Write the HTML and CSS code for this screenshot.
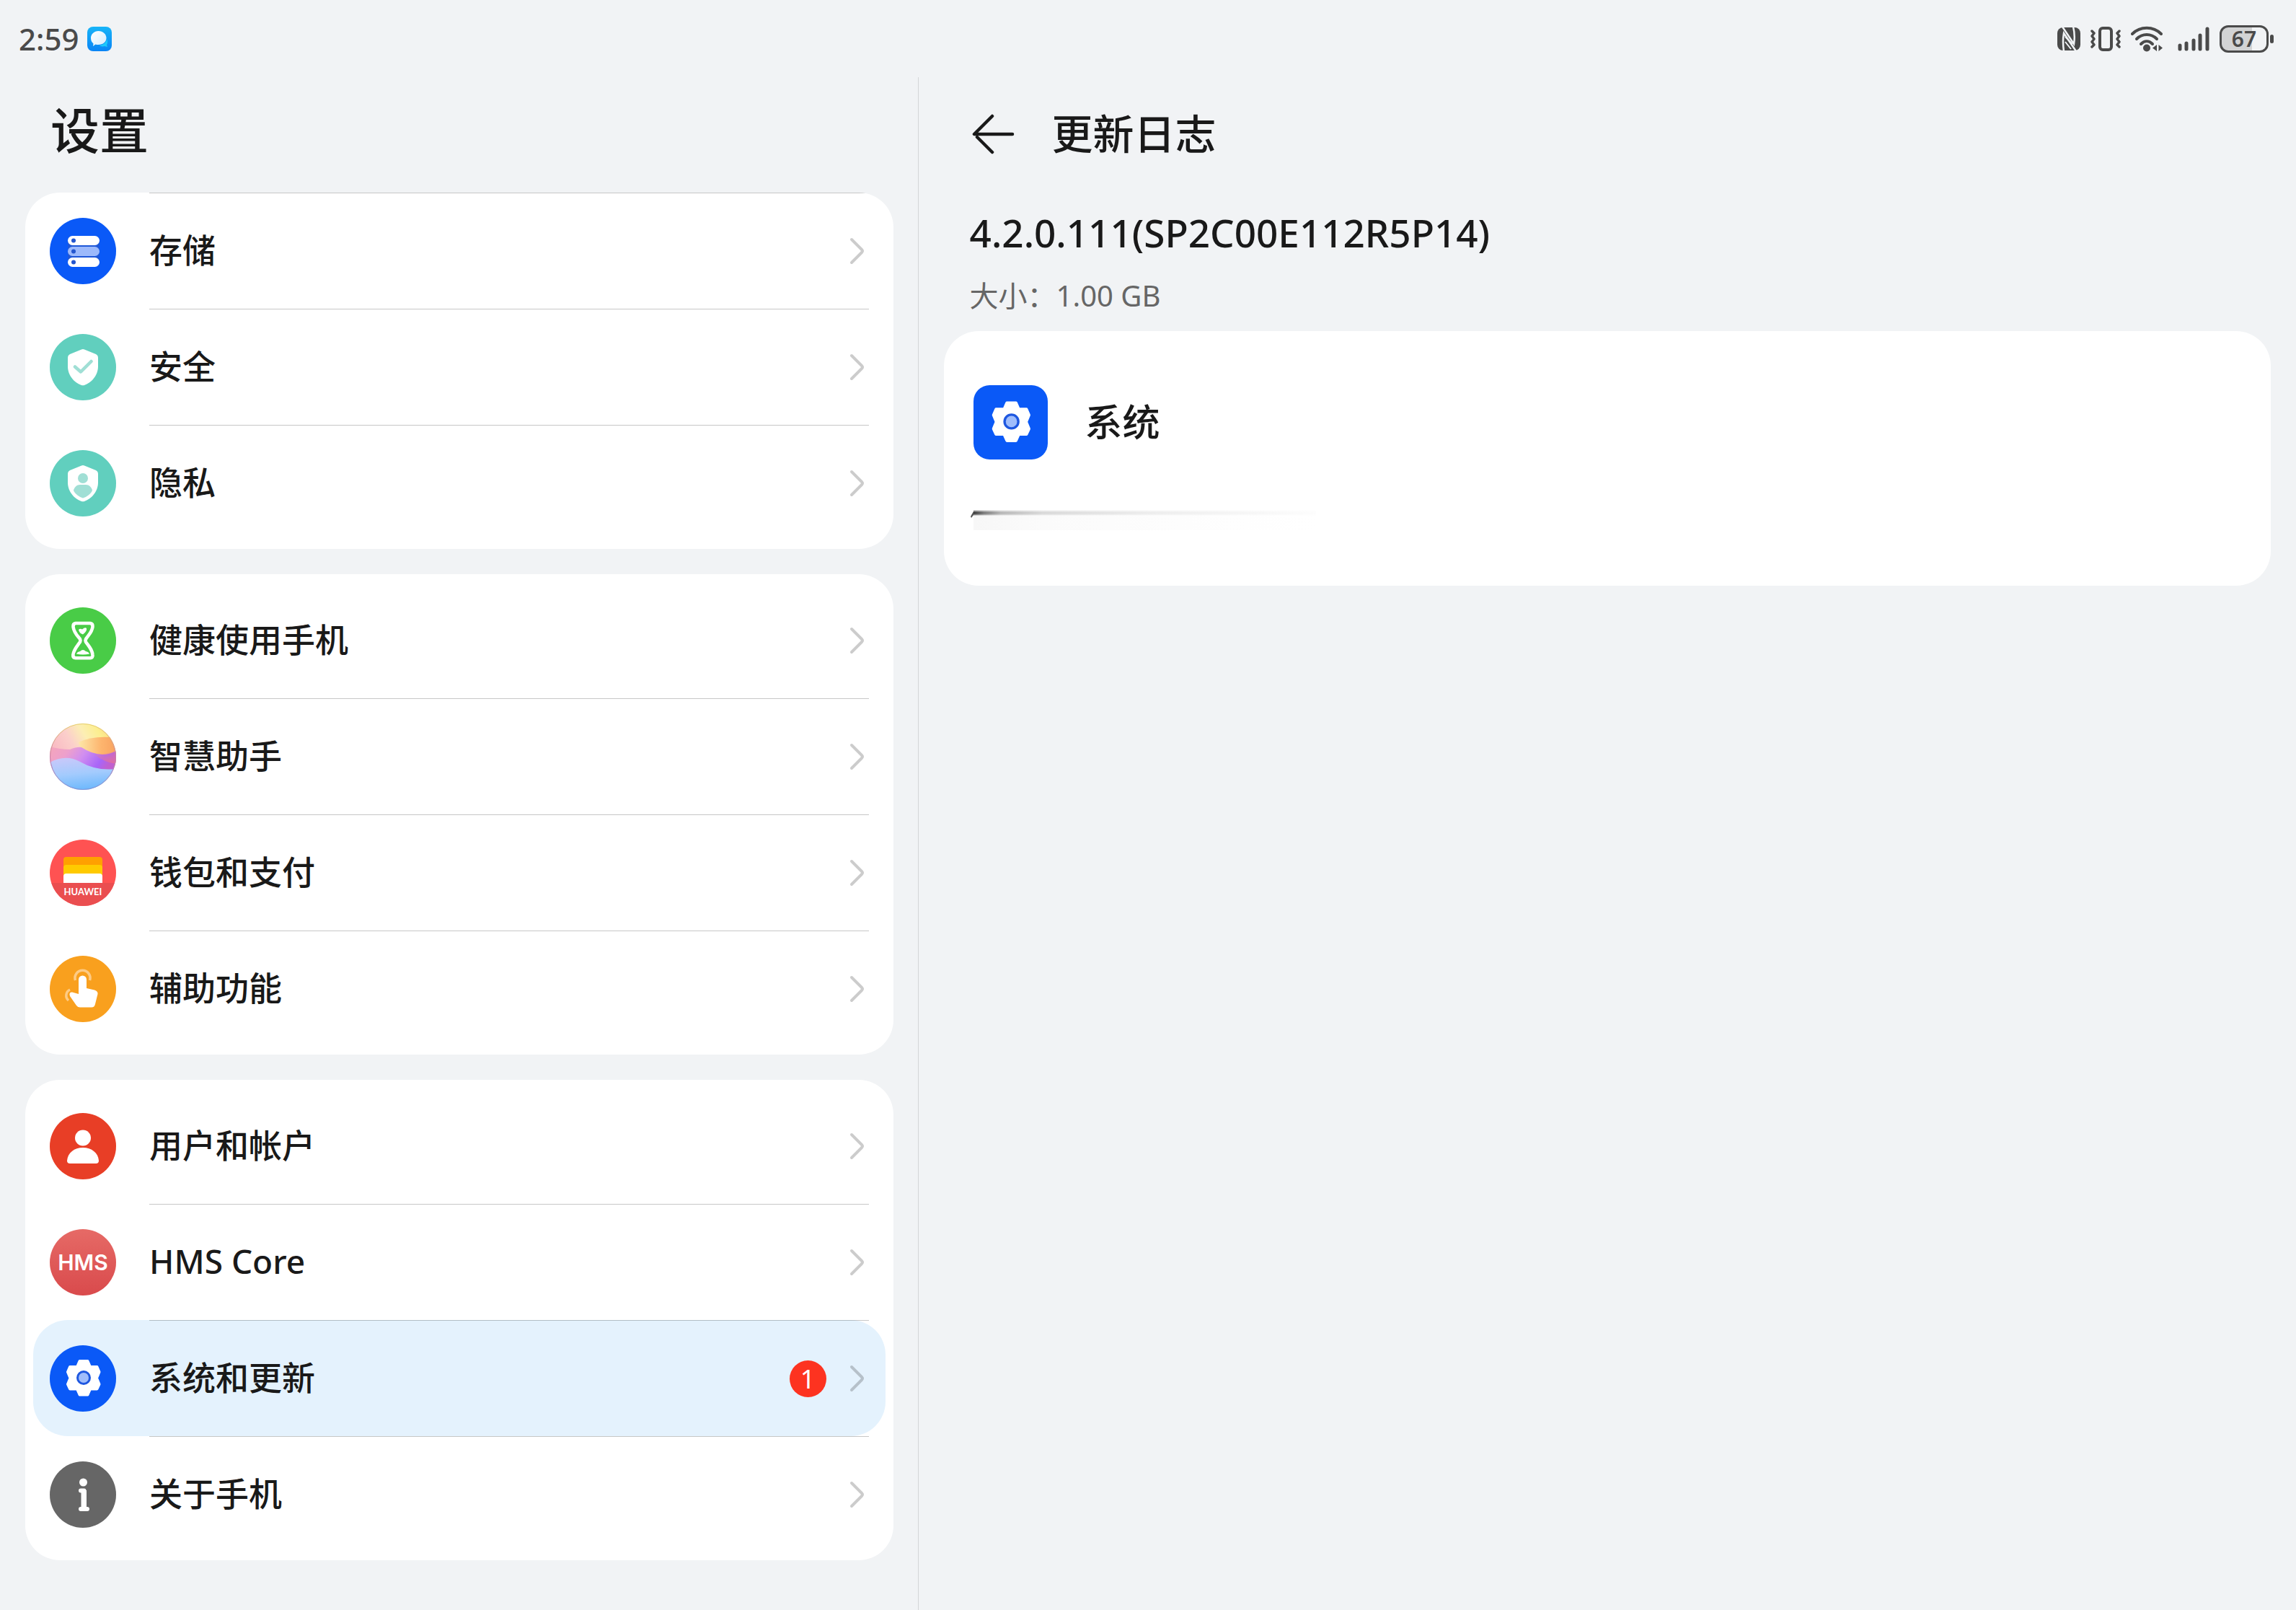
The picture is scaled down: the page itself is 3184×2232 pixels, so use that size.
FILE: index.html
```html
<!DOCTYPE html>
<html lang="zh-CN">
<head>
<meta charset="utf-8">
<meta name="viewport" content="width=device-width, initial-scale=1">
<title>设置 - 更新日志</title>
<link rel="stylesheet" href="styles.css">
</head>
<body>
<svg class="defs" aria-hidden="true">
  <symbol id="chevron" viewBox="0 0 22 40">
    <path d="M3 4 L17 18 Q19 20 17 22 L3 36" fill="none" stroke="currentColor" stroke-width="4" stroke-linecap="round" stroke-linejoin="round"/>
  </symbol>
  <symbol id="shield" viewBox="0 0 92 92">
    <path d="M44 21.500 Q46 20.500 48 21.500 L64 28 Q67 29.500 67 33 V45 C67 58 57 68 48 71 Q46 71.600 44 71 C35 68 25 58 25 45 V33 Q25 29.500 28 28 Z" fill="#fff"/>
  </symbol>
  <symbol id="gear" viewBox="0 0 92 92">
    <path d="M41.500 22 H52.500 L56 30 H65.500 L68.500 37 L65 45.500 L68.500 54 L65.500 60.500 H56 L52.500 68.500 H41.500 L38 60.500 H28 L25 54 L28.500 45.500 L25 37 L28 30 H38 Z" fill="#fff" stroke="#fff" stroke-width="4" stroke-linejoin="round"/>
    <circle cx="47" cy="45" r="10" fill="#1e57e0"/>
    <circle cx="47" cy="45" r="7" fill="#a0bdfb"/>
  </symbol>
</svg>

<header class="status">
  <div class="status-left">
    <time class="clock">2:59</time>
    <svg class="msg" width="34" height="34" viewBox="0 0 34 34" aria-hidden="true">
      <defs>
        <linearGradient id="msgBg" x1="0" y1="0" x2="0" y2="1"><stop offset="0" stop-color="#17b4f8"/><stop offset="1" stop-color="#0a84f5"/></linearGradient>
        <linearGradient id="msgBubble" x1="0" y1="0" x2="1" y2="1"><stop offset="0" stop-color="#fff"/><stop offset="1" stop-color="#d3ecfd"/></linearGradient>
      </defs>
      <rect width="34" height="34" rx="8" fill="url(#msgBg)"/>
      <path d="M27 17 C29 20 28 24 27 25 L28 28 L24 27 C21 28 18 27 17 26 C23 25 27 21 27 17Z" fill="#1cc9fb"/>
      <path d="M15.500 6 C22 6 26.500 10.500 26.500 15.500 C26.500 21 22 25 15.500 25 Q13 25 11.500 24.500 L8 27 L8.500 23.500 C6 21.500 5 18.500 5 15.500 C5 10.500 9.500 6 15.500 6Z" fill="url(#msgBubble)"/>
    </svg>
  </div>
  <div class="status-right">
    <svg class="s-nfc" width="32" height="34" viewBox="0 0 32 34" aria-hidden="true">
      <rect y="1" width="32" height="32" rx="8" fill="#4a4a4a"/>
      <path d="M7 0 L23 24 Q25 12 22 0 M9 34 Q7 20 9 9 L26 34" fill="none" stroke="#f1f3f5" stroke-width="2.500"/>
      <path d="M11 14 L21 24 M11 21 L19 31" stroke="#f1f3f5" stroke-width="2"/>
    </svg>
    <svg class="s-vib" width="42" height="36" viewBox="0 0 42 36" fill="none" stroke="#4a4a4a" aria-hidden="true">
      <rect x="13" y="3" width="16" height="30" rx="4" stroke-width="4"/>
      <path d="M2 7 L5 10 L2 14 L5 18 L2 22 L5 26 L2 29 M40 7 L37 10 L40 14 L37 18 L40 22 L37 26 L40 29" stroke-width="3.500" stroke-linecap="round" stroke-linejoin="round"/>
    </svg>
    <svg class="s-wifi" width="44" height="36" viewBox="0 0 44 36" aria-hidden="true">
      <g fill="none" stroke="#4a4a4a" stroke-width="4" stroke-linecap="round">
        <path d="M2 11 C13 0 31 0 42 11"/><path d="M8 18 C16 10 28 10 36 18"/><path d="M14 25 C19 20 25 20 30 25"/>
      </g>
      <circle cx="22" cy="30.500" r="5" fill="#4a4a4a"/>
      <path d="M36 26 V35 L30 30.500Z M38.500 26 V35 L44 30.500Z" fill="#4a4a4a"/>
    </svg>
    <svg class="s-sig" width="44" height="34" viewBox="0 0 44 34" stroke="#4a4a4a" stroke-width="5" stroke-linecap="round" aria-hidden="true">
      <path d="M3 26 V31 M12 23 V31 M22 19 V31 M31 12 V31 M41 3 V31"/>
    </svg>
    <div class="battery"><span class="battery-body">67</span><span class="battery-nub"></span></div>
  </div>
</header>

<div class="panes">
  <nav class="side" aria-label="设置">
    <h1 class="side-title">设置</h1>

    <ul class="group group-scrolled">
      <li class="item"><a class="row" href="#storage">
        <svg class="icon" viewBox="0 0 92 92" aria-hidden="true"><circle cx="46" cy="46" r="46" fill="#0a59f7"/>
          <rect x="25" y="25" width="44" height="43" rx="7" fill="#1e57d8"/>
          <rect x="25" y="25" width="44" height="13" rx="6.500" fill="#fff"/><rect x="25" y="40" width="44" height="13" rx="6.500" fill="#9cb9fb"/><rect x="25" y="55" width="44" height="13" rx="6.500" fill="#fff"/>
          <g fill="#2557cf"><circle cx="33" cy="31.500" r="3"/><circle cx="33" cy="46.500" r="3"/><circle cx="33" cy="61.500" r="3"/></g></svg>
        <span class="body"><span class="label">存储</span><svg class="chev" aria-hidden="true"><use href="#chevron"/></svg></span></a></li>
      <li class="item"><a class="row" href="#security">
        <svg class="icon" viewBox="0 0 92 92" aria-hidden="true"><circle cx="46" cy="46" r="46" fill="#61cfbe"/><use href="#shield"/>
          <path d="M35 45.500 L43 52.500 L57.500 38" fill="none" stroke="#a0dfd5" stroke-width="4.500" stroke-linecap="round" stroke-linejoin="round"/></svg>
        <span class="body"><span class="label">安全</span><svg class="chev" aria-hidden="true"><use href="#chevron"/></svg></span></a></li>
      <li class="item"><a class="row" href="#privacy">
        <svg class="icon" viewBox="0 0 92 92" aria-hidden="true"><circle cx="46" cy="46" r="46" fill="#61cfbe"/><use href="#shield"/>
          <g fill="#a0dfd5"><circle cx="46" cy="39" r="7"/><path d="M42 48 H50 C54.500 48 58 51.500 59 56 C57 61 51 65 46 66.500 C41 65 35 61 33 56 C34 51.500 37.500 48 42 48Z"/></g></svg>
        <span class="body"><span class="label">隐私</span><svg class="chev" aria-hidden="true"><use href="#chevron"/></svg></span></a></li>
    </ul>

    <ul class="group">
      <li class="item"><a class="row" href="#balance">
        <svg class="icon" viewBox="0 0 92 92" aria-hidden="true"><circle cx="46" cy="46" r="46" fill="#49cc47"/>
          <path d="M36 22 H56 Q60 22.500 59.500 27 C58.500 35 53 39 50 44 Q49 46 50 48 C55 55 59 59 59.500 66 Q60 70 56 70.300 H36 Q32 70 32.300 66 C33 59 37 55 42 48 Q43 46 42 44 C38 39 33.500 35 32.500 27 Q32 22.500 36 22Z" fill="none" stroke="#fff" stroke-width="4.600"/>
          <path d="M40 31 Q42 29 45 30.500 Q49 27 51 29 Q52 33 46 37.500 Q41 36 40 31Z M37 64.500 Q38 61.500 42 61 Q46 57 50 61 Q54 61.500 55 64.500 Q46 66.500 37 64.500Z" fill="#fff"/></svg>
        <span class="body"><span class="label">健康使用手机</span><svg class="chev" aria-hidden="true"><use href="#chevron"/></svg></span></a></li>
      <li class="item"><a class="row" href="#assistant">
        <svg class="icon" viewBox="0 0 92 92" aria-hidden="true">
          <defs>
            <clipPath id="orb"><circle cx="46" cy="46" r="46"/></clipPath>
            <linearGradient id="orbTop" x1="0" y1=".5" x2=".9" y2="0"><stop offset="0" stop-color="#f8b3c0"/><stop offset=".38" stop-color="#fbcfcb"/><stop offset=".6" stop-color="#fceeb4"/><stop offset=".8" stop-color="#fcee90"/><stop offset="1" stop-color="#fbd57c"/></linearGradient>
            <linearGradient id="orbAmber" x1="0" y1="0" x2="1" y2="0"><stop offset="0" stop-color="#fde7a8"/><stop offset=".6" stop-color="#fdb56e"/><stop offset="1" stop-color="#f8a35f"/></linearGradient>
            <linearGradient id="orbViolet" x1="0" y1="0" x2="1" y2=".3"><stop offset="0" stop-color="#f5a5bb"/><stop offset=".3" stop-color="#eda0cc"/><stop offset=".55" stop-color="#d08ef0"/><stop offset=".85" stop-color="#a865f8"/><stop offset="1" stop-color="#c060d0"/></linearGradient>
            <linearGradient id="orbBlush" x1="0" y1="0" x2="0" y2="1"><stop offset="0" stop-color="#f0829a" stop-opacity="0"/><stop offset="1" stop-color="#e66f96" stop-opacity=".8"/></linearGradient>
            <linearGradient id="orbBlue" x1=".3" y1="0" x2=".5" y2="1"><stop offset="0" stop-color="#c8c8fa"/><stop offset=".5" stop-color="#a3cbfd"/><stop offset="1" stop-color="#6cb8fc"/></linearGradient>
            <linearGradient id="orbRim" x1="0" y1="0" x2="0" y2="1"><stop offset="0" stop-color="#e6d070"/><stop offset=".5" stop-color="#c97fa8"/><stop offset="1" stop-color="#7f93d8"/></linearGradient>
          </defs>
          <g clip-path="url(#orb)">
            <rect width="92" height="92" fill="url(#orbTop)"/>
            <path d="M40 26 Q62 16 92 20 V60 H62 Q44 40 40 26Z" fill="url(#orbAmber)"/>
            <path d="M0 32 Q14 36 28 36 Q38 32 44 33 Q70 50 92 38 V70 H0Z" fill="url(#orbViolet)"/>
            <path d="M62 43 Q80 43 92 36 V56 Q76 54 62 43Z" fill="url(#orbBlush)"/>
            <path d="M0 54 Q22 42 42 53 Q64 66 92 63 V92 H0Z" fill="url(#orbBlue)"/>
          </g>
          <circle cx="46" cy="46" r="45.500" fill="none" stroke="url(#orbRim)"/></svg>
        <span class="body"><span class="label">智慧助手</span><svg class="chev" aria-hidden="true"><use href="#chevron"/></svg></span></a></li>
      <li class="item"><a class="row" href="#wallet">
        <svg class="icon" viewBox="0 0 92 92" aria-hidden="true"><circle cx="46" cy="46" r="46" fill="#ff5252"/>
          <path d="M2.200 60 H89.800 A46 46 0 0 1 2.200 60Z" fill="#ea4e50"/>
          <path d="M19 60 V28 Q19 24 23 24 H69 Q73 24 73 28 V60Z" fill="#ffa000"/>
          <path d="M19 60 V39 Q19 35 23 35 H69 Q73 35 73 39 V60Z" fill="#ffca00"/>
          <path d="M19 60 V51 Q19 47 23 47 H69 Q73 47 73 51 V60Z" fill="#fff"/>
          <text class="wallet-text" x="46" y="77" text-anchor="middle">HUAWEI</text></svg>
        <span class="body"><span class="label">钱包和支付</span><svg class="chev" aria-hidden="true"><use href="#chevron"/></svg></span></a></li>
      <li class="item"><a class="row" href="#accessibility">
        <svg class="icon" viewBox="0 0 92 92" aria-hidden="true"><circle cx="46" cy="46" r="46" fill="#f9a01e"/>
          <path d="M35.500 34 A10.500 10.500 0 1 1 55.500 34 M28 47 A9 9 0 0 0 26 62" fill="none" stroke="#fdcb85" stroke-width="3.500"/>
          <path d="M40 33 A5.500 5.500 0 0 1 51 33 V45 L62 47.500 Q67 49 66.500 53 L63 67 Q62 71.500 58 71.500 H42 Q39 71.500 37 69 L28 56 Q26 50.500 31 50.500 L40 53 Z" fill="#fff"/></svg>
        <span class="body"><span class="label">辅助功能</span><svg class="chev" aria-hidden="true"><use href="#chevron"/></svg></span></a></li>
    </ul>

    <ul class="group">
      <li class="item"><a class="row" href="#accounts">
        <svg class="icon" viewBox="0 0 92 92" aria-hidden="true"><circle cx="46" cy="46" r="46" fill="#e83e26"/>
          <circle cx="46" cy="34.500" r="11" fill="#fff"/><path d="M24 66 C25 55 34 48 46 48 C58 48 67 55 68 66 Q68 70 64 70 H28 Q24 70 24 66Z" fill="#fff"/></svg>
        <span class="body"><span class="label">用户和帐户</span><svg class="chev" aria-hidden="true"><use href="#chevron"/></svg></span></a></li>
      <li class="item"><a class="row" href="#hms">
        <svg class="icon" viewBox="0 0 92 92" aria-hidden="true"><defs><linearGradient id="hmsBg" x1="0" y1="0" x2="0" y2="1"><stop offset="0" stop-color="#e66a66"/><stop offset="1" stop-color="#d94a4c"/></linearGradient></defs>
          <circle cx="46" cy="46" r="46" fill="url(#hmsBg)"/><text class="hms-text" x="46" y="57" text-anchor="middle">HMS</text></svg>
        <span class="body"><span class="label">HMS Core</span><svg class="chev" aria-hidden="true"><use href="#chevron"/></svg></span></a></li>
      <li class="item"><a class="row row-active" href="#system" aria-current="page">
        <svg class="icon" viewBox="0 0 92 92" aria-hidden="true"><circle cx="46" cy="46" r="46" fill="#0a59f7"/><use href="#gear"/></svg>
        <span class="body"><span class="label">系统和更新</span><span class="count">1</span><svg class="chev" aria-hidden="true"><use href="#chevron"/></svg></span></a></li>
      <li class="item"><a class="row" href="#about">
        <svg class="icon" viewBox="0 0 92 92" aria-hidden="true"><circle cx="46" cy="46" r="46" fill="#666"/>
          <circle cx="46.500" cy="29" r="5.500" fill="#fff"/><path d="M43 40.500 H47.500 V65 M43 66 H52" fill="none" stroke="#fff" stroke-width="6" stroke-linecap="round" stroke-linejoin="round"/><path d="M43.500 40 H51 V66 H43.500Z" fill="#fff"/></svg>
        <span class="body"><span class="label">关于手机</span><svg class="chev" aria-hidden="true"><use href="#chevron"/></svg></span></a></li>
    </ul>
  </nav>

  <main class="detail">
    <div class="detail-head">
      <button class="back" type="button" aria-label="返回">
        <svg width="60" height="56" viewBox="0 0 60 56" fill="none" stroke="#191919" stroke-width="4.500" stroke-linecap="round" stroke-linejoin="round" aria-hidden="true">
          <path d="M29 3 L4 28 H57"/><path d="M8 32 L29 53"/>
        </svg>
      </button>
      <h2 class="detail-title">更新日志</h2>
    </div>
    <div class="version">
      <p class="version-name">4.2.0.111(SP2C00E112R5P14)</p>
      <p class="version-size">大小：1.00 GB</p>
    </div>
    <section class="card">
      <div class="card-head">
        <svg class="app" viewBox="0 0 92 92" aria-hidden="true"><rect width="92" height="92" rx="20" fill="#0a59f7"/><use href="#gear"/></svg>
        <h3 class="card-title">系统</h3>
      </div>
      <svg class="streak" viewBox="0 0 480 30" width="480" height="30" aria-hidden="true">
        <defs>
          <linearGradient id="streakX" x1="0" x2="1" y1="0" y2="0"><stop offset="0" stop-color="#333"/><stop offset=".03" stop-color="#777"/><stop offset=".08" stop-color="#b5b5b5"/><stop offset=".2" stop-color="#d8d8d8"/><stop offset=".5" stop-color="#ececec"/><stop offset="1" stop-color="#fdfdfd"/></linearGradient>
          <linearGradient id="streakY" x1="0" x2="0" y1="0" y2="1"><stop offset="0" stop-color="#fff" stop-opacity=".9"/><stop offset=".4" stop-color="#fff" stop-opacity="0"/><stop offset=".7" stop-color="#fff" stop-opacity=".1"/><stop offset="1" stop-color="#fff" stop-opacity=".9"/></linearGradient>
          <linearGradient id="streakGlow" x1="0" x2="1" y1="0" y2="0"><stop offset="0" stop-color="#f7f7f7"/><stop offset=".2" stop-color="#fbfbfb"/><stop offset="1" stop-color="#fff"/></linearGradient>
        </defs>
        <rect x="4" y="6" width="475" height="23" fill="url(#streakGlow)"/>
        <rect x="4" y="1" width="475" height="8" fill="url(#streakX)"/>
        <rect x="4" y="1" width="475" height="8" fill="url(#streakY)"/>
        <path d="M0 10 L4 3 V8 L1 12Z" fill="#555"/>
      </svg>
    </section>
  </main>
</div>
</body>
</html>
```
FILE: styles.css
```css
* {
  box-sizing: border-box;
}

body {
  margin: 0;
  min-height: 100vh;
  display: flex;
  flex-direction: column;
  background: #f1f3f5;
  color: #191919;
  font-family: "Noto Sans", "Noto Sans CJK SC", sans-serif;
  font-weight: 500;
}

h1, h2, h3, p, ul {
  margin: 0;
  padding: 0;
  font-weight: 500;
}

ul {
  list-style: none;
}

svg {
  display: block;
  flex: none;
}

.defs {
  position: absolute;
  width: 0;
  height: 0;
}

/* Status bar */
.status {
  height: 107px;
  padding: 0 31px 0 26px;
  display: flex;
  align-items: center;
  justify-content: space-between;
  color: #4a4a4a;
}

.status-left,
.status-right {
  display: flex;
  align-items: center;
}

.status-left {
  gap: 11px;
}

.status-right {
  gap: 14px;
}

.clock {
  font-size: 42px;
  line-height: 56px;
}

.s-sig {
  margin: 0 0 0 7px;
}

.battery {
  display: flex;
  align-items: center;
  gap: 2px;
}

.battery-body {
  width: 68px;
  height: 38px;
  border: 3px solid #4a4a4a;
  border-radius: 12px;
  background: linear-gradient(to right, #d2d3d4 67%, transparent 67%);
  font-size: 30px;
  font-weight: 600;
  line-height: 32px;
  text-align: center;
}

.battery-nub {
  width: 5px;
  height: 12px;
  border-radius: 3px;
  background: #4a4a4a;
}

/* Two panes */
.panes {
  flex: 1;
  display: flex;
}

.side {
  flex: 0 0 40%;
  padding: 0 34px 68px 35px;
  border-right: 1px solid #d4d6d8;
  display: flex;
  flex-direction: column;
  gap: 35px;
}

.side-title {
  height: 125px;
  padding-left: 35px;
  font-size: 68px;
  line-height: 148px;
}

.group {
  padding: 11px;
  border-radius: 48px;
  background: #fff;
  overflow: hidden;
}

.group-scrolled {
  padding-top: 0;
}

.row {
  height: 161px;
  padding: 0 23px;
  display: flex;
  align-items: center;
  gap: 46px;
  border-radius: 48px;
  color: inherit;
  text-decoration: none;
}

.row-active {
  background: #e4f2fd;
}

.icon {
  width: 92px;
  height: 92px;
}

.body {
  flex: 1;
  height: 161px;
  padding-right: 5px;
  display: flex;
  align-items: center;
  border-top: 1px solid transparent;
}

.item + .item .body,
.group-scrolled .body {
  border-top-color: rgba(0, 0, 0, 0.22);
}

.label {
  flex: 1;
  padding-bottom: 4px;
  font-size: 46px;
  line-height: 64px;
}

.count {
  width: 51px;
  height: 51px;
  margin-right: 32px;
  border-radius: 50%;
  background: #fd3320;
  color: #fff;
  font-size: 36px;
  font-weight: 400;
  line-height: 51px;
  text-align: center;
}

.chev {
  width: 22px;
  height: 40px;
  color: rgba(0, 0, 0, 0.2);
}

.wallet-text {
  fill: #fff;
  font-family: Lato, sans-serif;
  font-size: 13px;
  font-weight: 700;
}

.hms-text {
  fill: #fff;
  font-family: Inter, sans-serif;
  font-size: 30px;
  font-weight: 600;
}

/* Detail pane */
.detail {
  flex: 1;
  padding: 0 35px;
}

.detail-head {
  height: 158px;
  padding-left: 38px;
  display: flex;
  align-items: center;
  gap: 52px;
}

.back {
  padding: 0;
  border: 0;
  background: none;
}

.detail-title {
  padding-bottom: 2px;
  font-size: 57px;
  line-height: 80px;
}

.version {
  padding: 18px 36px 19px;
}

.version-name {
  font-size: 53px;
  line-height: 80px;
}

.version-size {
  padding-top: 17px;
  color: #666;
  font-size: 40px;
  font-weight: 400;
  line-height: 60px;
}

.card {
  min-height: 353px;
  padding: 75px 37px 76px;
  border-radius: 48px;
  background: #fff;
}

.card-head {
  padding-left: 4px;
  display: flex;
  align-items: center;
  gap: 52px;
}

.app {
  width: 103px;
  height: 103px;
}

.card-title {
  padding-bottom: 2px;
  font-size: 52px;
  line-height: 72px;
}

.streak {
  margin-top: 69px;
}
```
